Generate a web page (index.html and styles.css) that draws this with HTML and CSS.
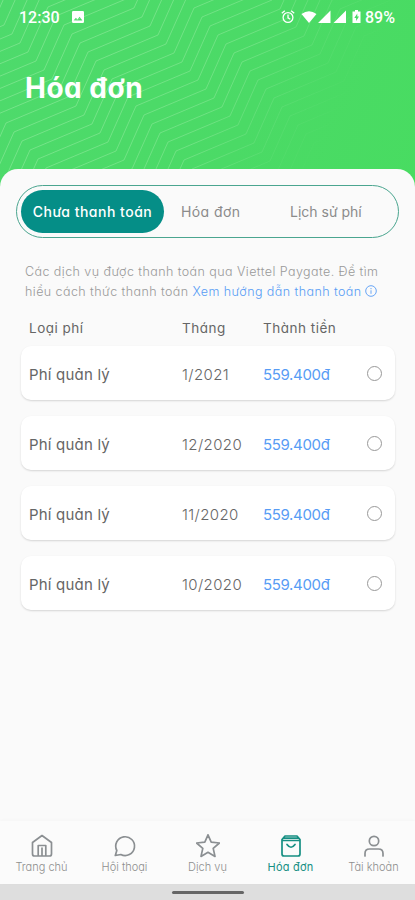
FILE: index.html
```html
<!DOCTYPE html>
<html lang="vi">
<head>
<meta charset="utf-8">
<meta name="viewport" content="width=device-width, initial-scale=1">
<title>Hóa đơn</title>
<link rel="stylesheet" href="styles.css">
</head>
<body>
<header class="hero">
  <svg class="waves" width="415" height="190" viewBox="0 0 415 190" aria-hidden="true">
    <defs>
      <linearGradient id="fade" gradientUnits="userSpaceOnUse" x1="110" y1="60" x2="315" y2="170">
        <stop offset="0" stop-color="#fff"/>
        <stop offset=".5" stop-color="#fff" stop-opacity=".85"/>
        <stop offset=".8" stop-color="#fff" stop-opacity=".25"/>
        <stop offset="1" stop-color="#fff" stop-opacity="0"/>
      </linearGradient>
      <mask id="m" maskUnits="userSpaceOnUse" x="0" y="0" width="415" height="190"><rect width="415" height="190" fill="url(#fade)"/></mask>
      <path id="w0" d="M-336 228l62-26 20-45 62-26 20-45 62-26 20-45 62-26 20-45 62-26 20-45 62-26 20-45 62-26 20-45 62-26 20-45"/>
      <g id="w2"><use href="#w0"/><use href="#w0" x="8" y="9"/></g>
      <g id="w4"><use href="#w2"/><use href="#w2" x="16" y="18"/></g>
      <g id="w8"><use href="#w4"/><use href="#w4" x="32" y="36"/></g>
      <g id="w16"><use href="#w8"/><use href="#w8" x="64" y="72"/></g>
    </defs>
    <g mask="url(#m)" fill="none" stroke="#a0efaa" stroke-opacity=".48" stroke-width="1"><use href="#w16"/><use href="#w16" x="128" y="144"/></g>
  </svg>
  <div class="status">
    <span class="clock">12:30</span>
    <svg class="photo" width="12" height="12" viewBox="0 0 12 12"><path fill="#fff" fill-rule="evenodd" d="M1.3 0h9.4Q12 0 12 1.3v9.4q0 1.3-1.3 1.3H1.3Q0 12 0 10.700V1.300Q0 0 1.300 0zM1.600 9.500h8.800L7.600 5.800 5.400 8.500 3.900 6.800z"/></svg>
    <svg class="signals" width="81" height="16" viewBox="0 0 81 16">
      <g fill="none" stroke="#fff" stroke-width="1.300"><circle cx="7" cy="8.500" r="4.900"/><path d="M7 5.500v3.300l2.300 1.400M.8 4.200 3.800 1.700M13.200 4.200l-3-2.500"/></g>
      <g fill="#fff"><path d="M20.500 5q7.500-5.500 15 0L28 14zM37 14 49.500 1.500V14zM52.500 14 65 1.500V14z"/><path fill-rule="evenodd" d="M74 1h3v1.500h2.500V14h-8V2.500H74zM76.300 4.500l-3 4.500h1.800v3l2.900-4.500h-1.700z"/></g>
    </svg>
    <span class="percent">89%</span>
  </div>
  <h1>Hóa đơn</h1>
</header>
<main>
  <nav class="tabs">
    <a class="tab active"><span>Chưa thanh toán</span></a>
    <a class="tab second"><span>Hóa đơn</span></a>
    <a class="tab third"><span>Lịch sử phí</span></a>
  </nav>
  <p class="note"><span class="line">Các dịch vụ được thanh toán qua Viettel Paygate. Để tìm</span>
    <span class="line">hiểu cách thức thanh toán <a>Xem hướng dẫn thanh toán</a> <svg width="12" height="12" viewBox="0 0 12 12" fill="none" stroke="#579cf5" stroke-width=".9"><circle cx="6" cy="6" r="5.300"/><path d="M6 5.300v3.500M6 3v1.200"/></svg></span></p>
  <div class="grid head"><span>Loại phí</span><span>Tháng</span><span>Thành tiền</span></div>
  <section class="list">
    <label class="grid card"><span>Phí quản lý</span><span class="date">1/2021</span><span class="money">559.400đ</span><i class="radio"></i></label>
    <label class="grid card"><span>Phí quản lý</span><span class="date">12/2020</span><span class="money">559.400đ</span><i class="radio"></i></label>
    <label class="grid card"><span>Phí quản lý</span><span class="date">11/2020</span><span class="money">559.400đ</span><i class="radio"></i></label>
    <label class="grid card"><span>Phí quản lý</span><span class="date">10/2020</span><span class="money">559.400đ</span><i class="radio"></i></label>
  </section>
</main>
<nav class="bottom">
  <a><svg width="24" height="24" viewBox="0 0 24 24"><path d="M2.500 8.500 12 1.500l9.500 7V20q0 2-2 2h-15q-2 0-2-2zM8.200 22V11.500h7.600V22M12 14v8"/></svg><span>Trang chủ</span></a>
  <a><svg width="24" height="24" viewBox="0 0 24 24"><path d="M2.300 21.500l1.500-5A9.400 9.400 0 1 1 7.800 20.500z"/></svg><span>Hội thoại</span></a>
  <a><svg width="24" height="24" viewBox="0 0 24 24"><path d="m12 .8 3.200 7.400 8.200.8-6.200 5.400 1.800 8L12 18.300 5 22.400l1.800-8L.6 9l8.200-.8z"/></svg><span>Dịch vụ</span></a>
  <a class="on"><svg width="24" height="24" viewBox="0 0 24 24"><path d="M6 2h12l3 3.500V20q0 2-2 2H5q-2 0-2-2V5.500zM3 6.500h18M5 4.200h14M8 10.500q4 5.500 8 0"/></svg><span>Hóa đơn</span></a>
  <a><svg width="24" height="24" viewBox="0 0 24 24"><circle cx="12" cy="7" r="4.700"/><path d="M3 22v-2.500Q3 15 7.500 15h9Q21 15 21 19.500V22"/></svg><span>Tài khoản</span></a>
</nav>
<footer class="gesture"><i></i></footer>
</body>
</html>
```
FILE: styles.css
```css
* { box-sizing: border-box; }
body {
  margin: 0; width: 415px; height: 900px; overflow: hidden;
  display: flex; flex-direction: column;
  background: #fafafa; color: #666;
  font-family: Inter, "Open Sans", sans-serif;
  font-feature-settings: "cv11";
  white-space: nowrap;
}
.hero { position: relative; height: 190px; flex: none; background: linear-gradient(115deg, #4eda6c, #4bda66 60%, #48dc61); }
.waves { position: absolute; left: 0; top: 0; }
.status {
  position: relative; display: flex; align-items: center; height: 34px; padding: 1px 20px 0 19px;
  font: 500 16px/34px Roboto, sans-serif; color: #fff;
}
.photo { margin-top: -2px; }
.clock { width: 53px; }
.signals { margin: -1px 3px 0 auto; }
.percent { width: 30px; }
h1 { position: relative; margin: 36px 0 0 25px; font-size: 28px; line-height: 36px; font-weight: 700; letter-spacing: .5px; color: #fff; }
main { position: relative; flex: 1; margin-top: -21px; background: #fafafa; border-radius: 18px 18px 0 0; padding: 16px 16px 0; }
.tabs { display: flex; height: 53px; padding: 4px; border: 1px solid #4aa58f; border-radius: 27px; font-size: 14px; line-height: 44px; color: #8b8b8b; }
.tab.active { width: 143px; text-align: center; border-radius: 22px; background: #058e87; color: #fff; font-weight: 500; letter-spacing: .5px; }
.tab.second { margin-left: 17px; width: 109px; letter-spacing: .4px; }
.note { margin: 24px 0 0 9px; font-size: 12.500px; line-height: 20px; color: #999; font-weight: 300; letter-spacing: .43px; }
.line { display: block; }
.note a { color: #579cf5; }
.note svg { vertical-align: -1px; margin-left: -1px; }
.grid { display: grid; grid-template-columns: 153px 81px 1fr 16px; align-items: center; }
.head { margin: 15px 0 0 13px; height: 21px; font-size: 13.500px; letter-spacing: .5px; }
.list { display: grid; gap: 16px; margin: 8px 4px 0 5px; }
.card { height: 54px; padding: 2px 12px 0 8px; background: #fff; border-radius: 10px; box-shadow: 0 1px 2px rgba(0,0,0,.15); font-size: 15px; letter-spacing: .2px; }
.date { font-weight: 300; letter-spacing: .4px; }
.money { color: #579cf5; letter-spacing: -.35px; }
.radio { width: 15px; height: 15px; border: 1px solid #999; border-radius: 50%; margin-top: -2px; }
.bottom { display: grid; grid-template-columns: repeat(5, 83px); height: 63px; flex: none; background: #fbfbfb; box-shadow: 0 -1px 3px rgba(0,0,0,.025); position: relative; color: #8e8e8e; font-size: 11px; }
.bottom a { display: flex; flex-direction: column; align-items: center; padding-top: 13px; line-height: 16px; font-weight: 300; }
.bottom svg { margin-bottom: 1px; fill: none; stroke: #8b8f92; stroke-width: 1.700; stroke-linejoin: round; stroke-linecap: round; width: 24px; height: 24px; }
.bottom .on { color: #168f83; font-weight: 400; letter-spacing: .2px; }
.bottom .on svg { stroke: #168f83; }
.gesture { height: 16px; flex: none; background: #dedede; display: flex; justify-content: center; padding-top: 7px; }
.gesture i { width: 72px; height: 3px; border-radius: 2px; background: #666; }
```
